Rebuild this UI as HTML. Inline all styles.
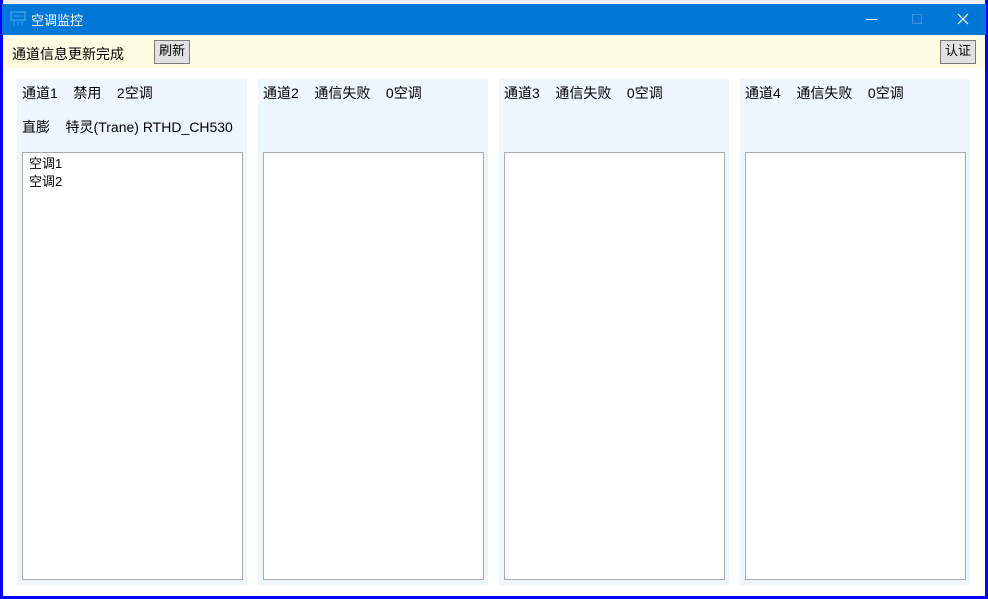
<!DOCTYPE html>
<html><head><meta charset="utf-8"><style>
*{margin:0;padding:0;box-sizing:border-box}
body{width:988px;height:599px;background:#fff;position:relative;overflow:hidden;font-family:"Liberation Sans","Noto Sans CJK SC",sans-serif;font-size:14px;color:#000}
.a{position:absolute}
.btn{position:absolute;background:#e1e1e1;border:1px solid #7a7a7a;font-size:13px;line-height:20px;text-align:center}
.panel{position:absolute;top:79px;width:230px;height:506px;background:#eef6fe}
.panel .h{position:absolute;left:5px;top:4px;white-space:pre}
.panel .l{position:absolute;left:5px;top:73px;width:221px;height:428px;background:#fff;border:1px solid #a9a9a9;font-size:13px;padding:2px 6px;line-height:18px}
</style></head><body>
<div class="a" style="left:0;top:0;width:988px;height:3px;background:#f0f0f0"></div>
<div class="a" style="left:0;top:0;width:3px;height:599px;background:#0000ff"></div>
<div class="a" style="left:985px;top:0;width:3px;height:599px;background:#0000ff"></div>
<div class="a" style="left:0;top:596px;width:988px;height:3px;background:#0000ff"></div>
<div class="a" style="left:2px;top:4px;width:984px;height:31px;background:#0078d7"></div>
<svg class="a" style="left:10px;top:11px" width="16" height="16" viewBox="0 0 16 16"><rect x="1" y="1" width="14" height="8" fill="none" stroke="#3a9ae8" stroke-width="1.5"/><line x1="3" y1="5" x2="13" y2="5" stroke="#3a9ae8"/><line x1="4" y1="10" x2="4" y2="15" stroke="#3a9ae8"/><line x1="12" y1="10" x2="12" y2="15" stroke="#3a9ae8"/><line x1="8" y1="10" x2="8" y2="14" stroke="#3a9ae8"/></svg>
<div class="a" style="left:31px;top:10px;color:#fff;font-size:13px">空调监控</div>
<div class="a" style="left:866px;top:19px;width:11px;height:1px;background:#fff"></div>
<div class="a" style="left:912px;top:14px;width:10px;height:10px;border:1px solid #3d92db"></div>
<svg class="a" style="left:957px;top:13px" width="12" height="12"><path d="M1 1L11 11M11 1L1 11" stroke="#fff" stroke-width="1.2"/></svg>
<div class="a" style="left:3px;top:35px;width:982px;height:33px;background:#fffde1"></div>
<div class="a" style="left:12px;top:44px">通道信息更新完成</div>
<div class="btn" style="left:154px;top:40px;width:36px;height:24px">刷新</div>
<div class="btn" style="left:940px;top:40px;width:36px;height:24px">认证</div>
<div class="panel" style="left:17px"><div class="h">通道1    禁用    2空调</div><div class="h" style="top:38px">直膨    特灵(Trane) RTHD_CH530</div><div class="l">空调1<br>空调2</div></div>
<div class="panel" style="left:258px"><div class="h">通道2    通信失败    0空调</div><div class="l"></div></div>
<div class="panel" style="left:499px"><div class="h">通道3    通信失败    0空调</div><div class="l"></div></div>
<div class="panel" style="left:740px"><div class="h">通道4    通信失败    0空调</div><div class="l"></div></div>
</body></html>
